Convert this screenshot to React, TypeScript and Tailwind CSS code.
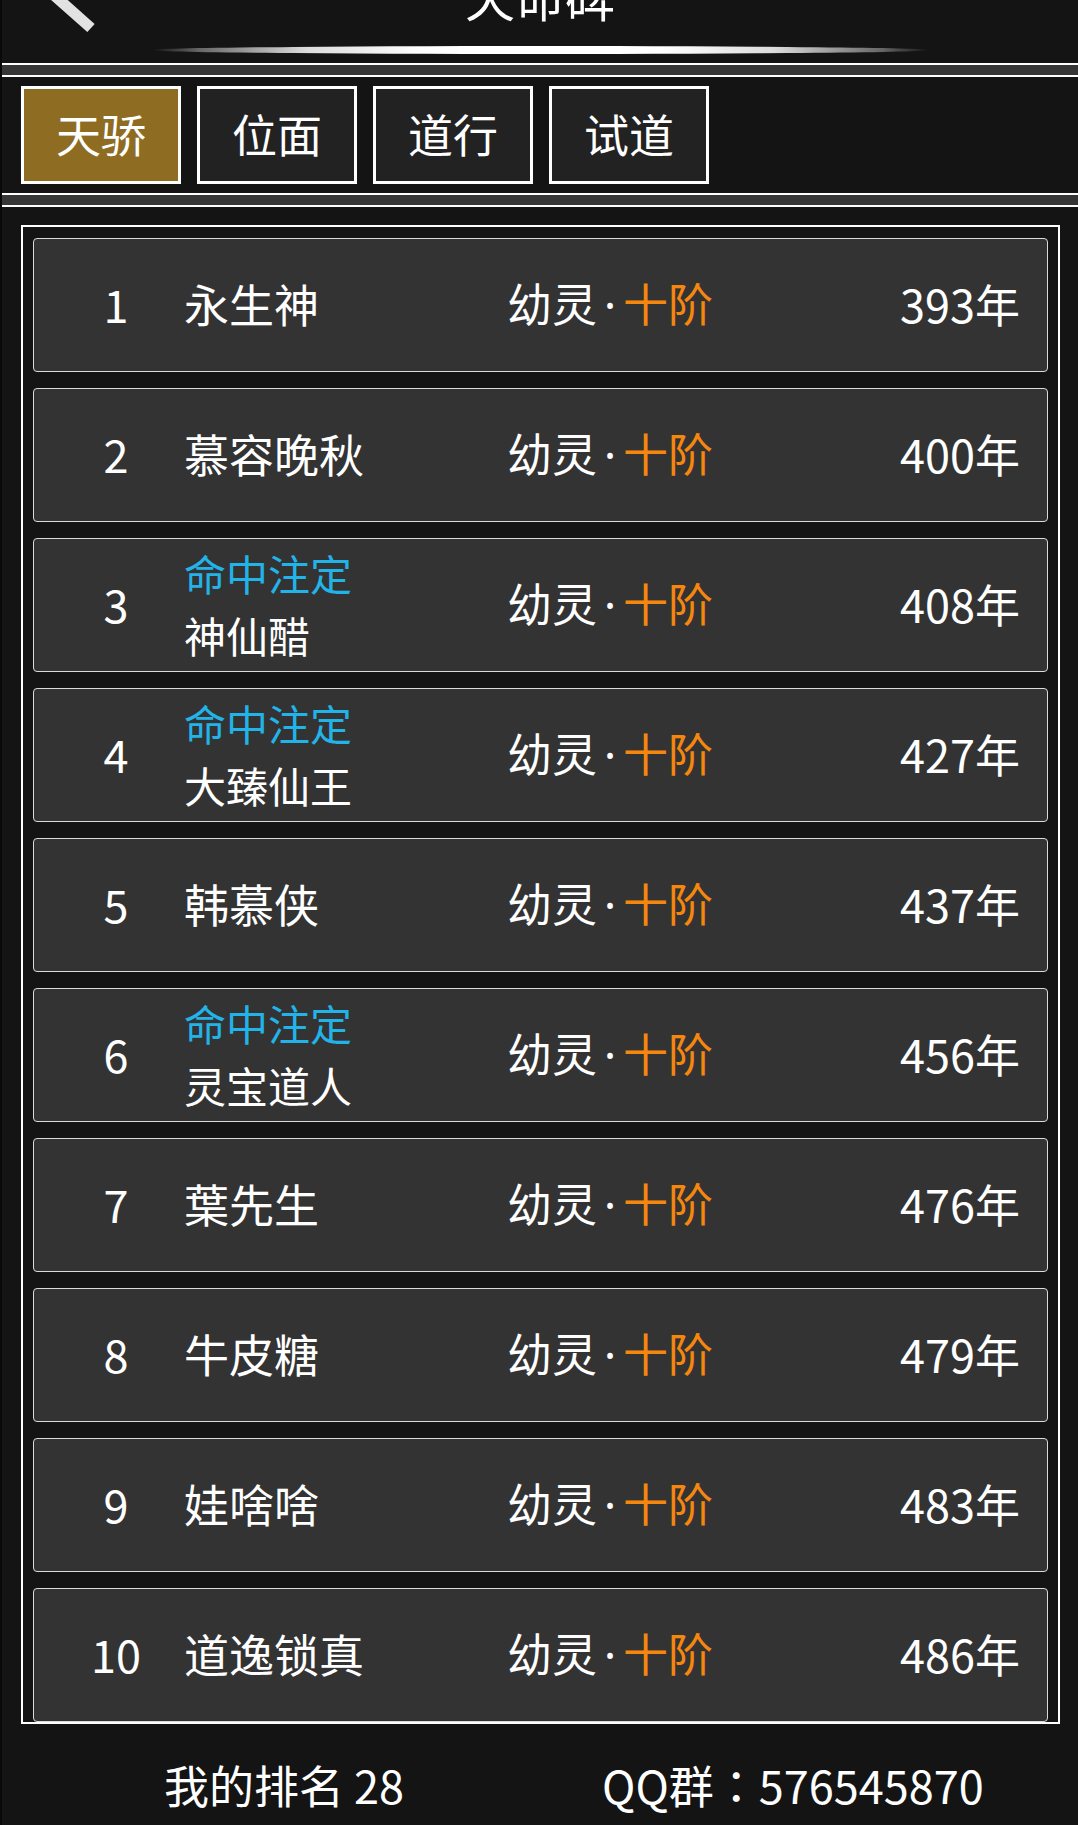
import React from 'react';

interface RankRow {
  rank: number;
  name: string;
  age: number;
  title?: string;
}

const rows: RankRow[] = [
  { rank: 1, name: '永生神', age: 393 },
  { rank: 2, name: '慕容晚秋', age: 400 },
  { rank: 3, name: '神仙醋', age: 408, title: '命中注定' },
  { rank: 4, name: '大臻仙王', age: 427, title: '命中注定' },
  { rank: 5, name: '韩慕侠', age: 437 },
  { rank: 6, name: '灵宝道人', age: 456, title: '命中注定' },
  { rank: 7, name: '葉先生', age: 476 },
  { rank: 8, name: '牛皮糖', age: 479 },
  { rank: 9, name: '娃啥啥', age: 483 },
  { rank: 10, name: '道逸锁真', age: 486 },
];

const tabs = ['天骄', '位面', '道行', '试道'];

// white line / grey bar / white line separator
function Divider() {
  return (
    <div>
      <div className="h-[2px] bg-white" />
      <div className="h-[10px] bg-[#373737]" />
      <div className="h-[2px] bg-white" />
    </div>
  );
}

export default function App() {
  return (
    <div className="w-[1078px] h-[1825px] overflow-hidden bg-[#141414] border-l-2 border-[#090909] text-white font-['Noto_Sans_CJK_SC',sans-serif]">
      {/* Header */}
      <div className="relative flex flex-col h-[63px] overflow-hidden">
        <div className="-mt-[30px] text-center text-[50px] leading-[50px]">天命碑</div>
        <div className="mt-[26px] mx-auto w-[777px] h-[8px] rounded-[50%] bg-[linear-gradient(to_right,transparent,#666_6%,#ddd_20%,#fff_35%,#fff_65%,#ddd_80%,#666_94%,transparent)]" />
        <svg className="absolute left-0 top-0" width="110" height="50" viewBox="0 0 110 50">
          <line x1="19" y1="-34" x2="89" y2="28" stroke="#e2e2e2" strokeWidth="11" />
        </svg>
      </div>

      <Divider />

      {/* Tabs */}
      <div className="flex gap-[16px] pl-[19px] py-[9px]">
        {tabs.map((t, i) => (
          <div
            key={t}
            className={`w-[160px] h-[98px] border-[3px] border-white flex items-center justify-center text-[45px] leading-[60px] pb-[2px] ${
              i === 0 ? 'bg-[#8e6c22]' : 'bg-[#222222]'
            }`}
          >
            {t}
          </div>
        ))}
      </div>

      <Divider />

      {/* Ranking list */}
      <div className="mt-[18px] ml-[19px] w-[1039px] border-2 border-white pt-[11px] px-[10px]">
        <div className="flex flex-col gap-[16px]">
          {rows.map((r) => (
            <div
              key={r.rank}
              className="flex items-center h-[134px] bg-[#333333] border border-[#dadada] rounded-[4px] text-[45px] leading-[62px] pb-[3px]"
            >
              <div className="ml-[40px] w-[84px] text-center">{r.rank}</div>
              <div className="ml-[26px] w-[323px]">
                {r.title ? (
                  <div className="text-[42px]">
                    <div className="text-[#22b4e8]">{r.title}</div>
                    <div>{r.name}</div>
                  </div>
                ) : (
                  <div>{r.name}</div>
                )}
              </div>
              <div className="flex-1">
                幼灵
                <span className="px-[7px] font-['Noto_Sans',sans-serif]">·</span>
                <span className="text-[#f5870f]">十阶</span>
              </div>
              <div className="pr-[27px] text-right">{r.age}年</div>
            </div>
          ))}
        </div>
      </div>

      {/* Footer */}
      <div className="flex pt-[30px] text-[45px] leading-[62px]">
        <span className="ml-[162px]">我的排名 28</span>
        <span className="ml-[198px]">
          QQ群<span className="font-['Noto_Sans_CJK_TC',sans-serif]">：</span>576545870
        </span>
      </div>
    </div>
  );
}
